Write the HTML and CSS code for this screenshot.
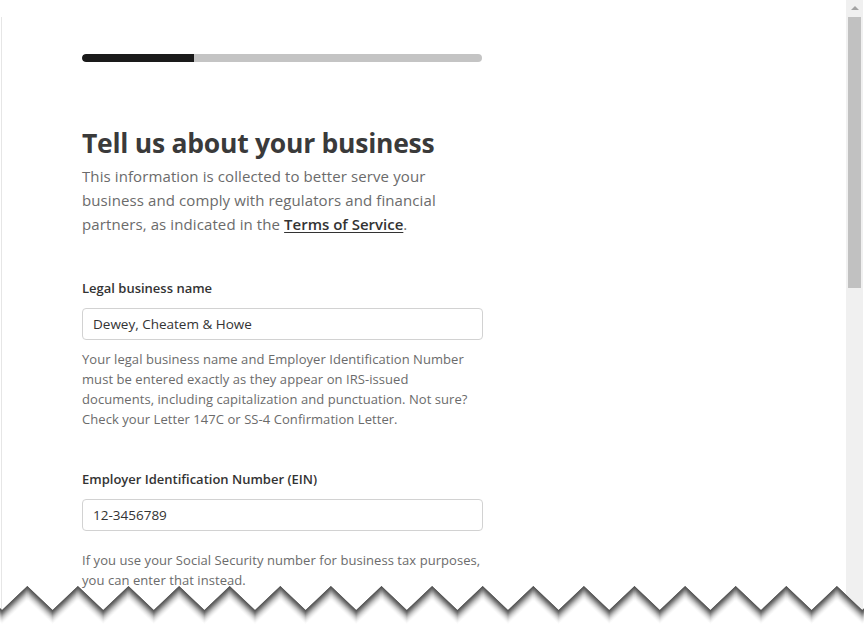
FILE: index.html
```html
<!DOCTYPE html>
<html lang="en">
<head>
<meta charset="utf-8">
<title>Tell us about your business</title>
<link rel="stylesheet" href="styles.css">
</head>
<body>
<div class="window">
  <main class="page">
    <div class="form">
      <div class="progress"><div class="progress-fill"></div></div>
      <h1 class="title">Tell us about your business</h1>
      <p class="intro">This information is collected to better serve your business and comply with regulators and financial partners, as indicated in the <a class="link" href="#">Terms of Service</a>.</p>

      <div class="field">
        <label class="label" for="legal">Legal business name</label>
        <input class="input" id="legal" type="text" value="Dewey, Cheatem &amp; Howe">
        <p class="help">Your legal business name and Employer Identification Number must be entered exactly as they appear on IRS-issued documents, including capitalization and punctuation. Not sure? Check your Letter 147C or SS-4 Confirmation Letter.</p>
      </div>

      <div class="field field-ein">
        <label class="label" for="ein">Employer Identification Number (EIN)</label>
        <input class="input" id="ein" type="text" value="12-3456789">
        <p class="help help-ein">If you use your Social Security number for business tax purposes, you can enter that instead.</p>
      </div>
    </div>
  </main>
  <div class="scrollbar">
    <div class="scroll-arrow"></div>
    <div class="scroll-thumb"></div>
  </div>
</div>

<svg class="tear" viewBox="0 0 864 633" width="864" height="633" aria-hidden="true">
  <defs>
    <polyline id="zig" fill="none" points="-23.3,586 2,610 27.3,586 52.6,610 77.9,586 103.2,610 128.5,586 153.8,610 179.1,586 204.4,610 229.7,586 255,610 280.3,586 305.6,610 330.9,586 356.2,610 381.5,586 406.8,610 432.1,586 457.4,610 482.7,586 508,610 533.3,586 558.6,610 583.9,586 609.2,610 634.5,586 659.8,610 685.1,586 710.4,610 735.7,586 761,610 786.3,586 811.6,610 836.9,586 862.2,610 887.5,586"/>
    <clipPath id="below">
      <polygon points="-23.3,586 2,610 27.3,586 52.6,610 77.9,586 103.2,610 128.5,586 153.8,610 179.1,586 204.4,610 229.7,586 255,610 280.3,586 305.6,610 330.9,586 356.2,610 381.5,586 406.8,610 432.1,586 457.4,610 482.7,586 508,610 533.3,586 558.6,610 583.9,586 609.2,610 634.5,586 659.8,610 685.1,586 710.4,610 735.7,586 761,610 786.3,586 811.6,610 836.9,586 862.2,610 887.5,586 887.5,640 -23.3,640"/>
    </clipPath>
  </defs>
  <g clip-path="url(#below)">
    <rect x="-30" y="560" width="930" height="90" fill="#ffffff"/>
    <g stroke-width="1.6">
      <use href="#zig" transform="translate(0,13)" stroke="#fcfcfc"/>
      <use href="#zig" transform="translate(0,12)" stroke="#f7f7f7"/>
      <use href="#zig" transform="translate(0,11)" stroke="#f0f0f0"/>
      <use href="#zig" transform="translate(0,10)" stroke="#e8e8e8"/>
      <use href="#zig" transform="translate(0,9)" stroke="#dddddd"/>
      <use href="#zig" transform="translate(0,8)" stroke="#d2d2d2"/>
      <use href="#zig" transform="translate(0,7)" stroke="#c4c4c4"/>
      <use href="#zig" transform="translate(0,6)" stroke="#b4b4b4"/>
      <use href="#zig" transform="translate(0,5)" stroke="#a2a2a2"/>
      <use href="#zig" transform="translate(0,4)" stroke="#909090"/>
      <use href="#zig" transform="translate(0,3)" stroke="#7e7e7e"/>
      <use href="#zig" transform="translate(0,2)" stroke="#6e6e6e"/>
      <use href="#zig" transform="translate(0,1)" stroke="#616161"/>
      <use href="#zig" transform="translate(0,0)" stroke="#575757"/>
    </g>
  </g>
</svg>
</body>
</html>
```

FILE: styles.css
```css
* { box-sizing: border-box; }

html, body {
  margin: 0;
  padding: 0;
  background: #ffffff;
}

body {
  width: 864px;
  height: 633px;
  overflow: hidden;
  position: relative;
  font-family: "Open Sans", "Noto Sans", "Liberation Sans", sans-serif;
  color: #333333;
}

.window {
  display: flex;
  height: 633px;
}

.page {
  flex: 1;
  margin-top: 17px;
  margin-left: 1px;
  border-left: 1px solid #e6e6e6;
  padding: 37px 0 0 80px;
}

.form {
  width: 400px;
  display: flex;
  flex-direction: column;
}

.progress {
  height: 8px;
  border-radius: 4px;
  background: #c4c4c4;
  overflow: hidden;
}

.progress-fill {
  width: 112px;
  height: 100%;
  background: #1a1a1a;
  border-radius: 4px 0 0 4px;
}

.title {
  margin: 64px 0 0;
  font-size: 26.5px;
  line-height: 34px;
  font-weight: 700;
  color: #3a3a3a;
  letter-spacing: -0.25px;
}

.intro {
  margin: 4px 0 0;
  font-size: 15px;
  line-height: 24px;
  color: #6b6b6b;
  letter-spacing: 0.1px;
}

.link {
  color: #333333;
  font-weight: 600;
  letter-spacing: 0;
  text-decoration: underline;
  text-underline-offset: 2px;
}

.field {
  display: flex;
  flex-direction: column;
  margin-top: 42px;
}

.field-ein {
  margin-top: 40px;
}

.label {
  font-size: 13px;
  line-height: 20px;
  font-weight: 600;
  color: #333333;
}

.input {
  margin-top: 10px;
  height: 32px;
  width: 401px;
  border: 1px solid #d2d2d2;
  border-radius: 4px;
  padding: 0 10px;
  font-family: inherit;
  font-size: 13.5px;
  color: #333333;
  background: #ffffff;
  outline: none;
}

.help {
  margin: 9px 0 0;
  font-size: 13px;
  line-height: 20px;
  color: #6b6b6b;
  letter-spacing: 0.06px;
}

.help-ein {
  margin-top: 19px;
}

.scrollbar {
  width: 17px;
  margin-right: 1px;
  background: #f0f0f0;
  display: flex;
  flex-direction: column;
  align-items: center;
}

.scroll-arrow {
  margin-top: 6px;
  width: 0;
  height: 0;
  border-left: 4px solid transparent;
  border-right: 4px solid transparent;
  border-bottom: 4px solid #a3a3a3;
}

.scroll-thumb {
  margin-top: 7px;
  width: 13px;
  height: 271px;
  background: #c1c1c1;
}

.tear {
  position: absolute;
  left: 0;
  top: 0;
  pointer-events: none;
}
```
